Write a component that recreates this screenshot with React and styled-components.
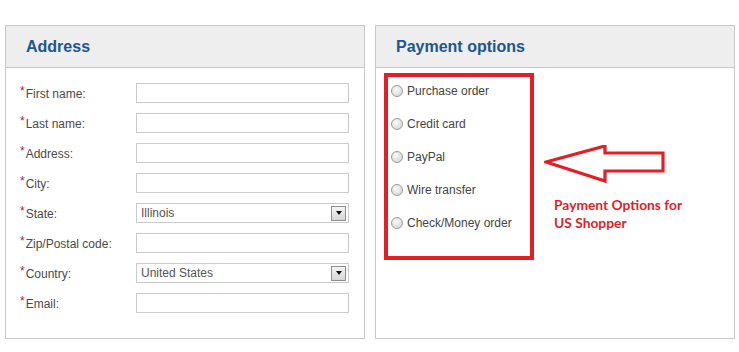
import React from 'react'
import styled, { createGlobalStyle } from 'styled-components'

const GlobalStyle = createGlobalStyle`
  body {
    margin: 0;
    background: #fff;
    font-family: "Liberation Sans", Arial, sans-serif;
  }
`;

const addressFields = [
  { label: 'First name:' },
  { label: 'Last name:' },
  { label: 'Address:' },
  { label: 'City:' },
  { label: 'State:', select: 'Illinois' },
  { label: 'Zip/Postal code:' },
  { label: 'Country:', select: 'United States' },
  { label: 'Email:' },
];

const paymentOptions = ['Purchase order', 'Credit card', 'PayPal', 'Wire transfer', 'Check/Money order'];

function App () {
  return (
    <Page>
      <GlobalStyle />
      <Panel>
        <PanelHeader>Address</PanelHeader>
        <FormBody>
          {addressFields.map((f) => (
            <FieldRow key={f.label}>
              <Label><Star>*</Star>{f.label}</Label>
              {f.select ? (
                <SelectBox>
                  <span>{f.select}</span>
                  <SelectButton><Caret /></SelectButton>
                </SelectBox>
              ) : (
                <TextInput type="text" />
              )}
            </FieldRow>
          ))}
        </FormBody>
      </Panel>

      <Panel>
        <PanelHeader>Payment options</PanelHeader>
        <PaymentBody>
          <HighlightBox>
            {paymentOptions.map((p) => (
              <OptionRow key={p}>
                <Radio />
                {p}
              </OptionRow>
            ))}
          </HighlightBox>
          <Callout>
            <svg width="122" height="40" viewBox="0 0 122 40">
              <polygon
                points="2,17 61,1 61,8 119,8 119,26 61,26 61,36"
                fill="none"
                stroke="#e31e26"
                strokeWidth="3.2"
                strokeLinejoin="miter"
              />
            </svg>
            <CalloutText>Payment Options for<br />US Shopper</CalloutText>
          </Callout>
        </PaymentBody>
      </Panel>
    </Page>
  )
}

const Page = styled.div `
    display: flex;
    gap: 10px;
    padding: 25px 0 0 5px;
`;

const Panel = styled.div `
    width: 358px;
    height: 312px;
    border: 1px solid #c9c9c9;
    display: flex;
    flex-direction: column;
`;

const PanelHeader = styled.div `
    height: 41px;
    line-height: 41px;
    background-color: #eeeeee;
    border-bottom: 1px solid #c9c9c9;
    padding-left: 20px;
    font-size: 16px;
    font-weight: bold;
    color: #1d5592;
`;

const FormBody = styled.div `
    display: flex;
    flex-direction: column;
    gap: 10px;
    padding: 15px 0 0 14px;
`;

const FieldRow = styled.div `
    display: flex;
    align-items: center;
    height: 20px;
`;

const Label = styled.div `
    width: 116px;
    font-size: 12px;
    color: #4a4a4a;
    padding-top: 1px;
`;

const Star = styled.span `
    color: #c0141e;
    font-size: 12px;
    margin-right: 1px;
    position: relative;
    top: -3px;
`;

const TextInput = styled.input `
    box-sizing: border-box;
    width: 213px;
    height: 20px;
    margin: 0;
    border: 1px solid #cbcbcb;
    background: #fff;
    outline: none;
`;

const SelectBox = styled.div `
    box-sizing: border-box;
    width: 213px;
    height: 20px;
    border: 1px solid #cbcbcb;
    display: flex;
    align-items: center;
    justify-content: space-between;
    padding: 0 2px 0 4px;
    font-size: 12px;
    color: #555;
`;

const SelectButton = styled.div `
    box-sizing: border-box;
    width: 15px;
    height: 15px;
    border: 1px solid #8e8e8e;
    background: linear-gradient(#f4f4f4, #d6d6d6);
    display: flex;
    align-items: center;
    justify-content: center;
`;

const Caret = styled.div `
    width: 0;
    height: 0;
    border-left: 3px solid transparent;
    border-right: 3px solid transparent;
    border-top: 4px solid #111;
`;

const PaymentBody = styled.div `
    display: flex;
    align-items: flex-start;
    padding: 5px 0 0 8px;
`;

const HighlightBox = styled.div `
    box-sizing: border-box;
    width: 150px;
    height: 187px;
    border: 4px solid #e31e26;
    display: flex;
    flex-direction: column;
    gap: 19px;
    padding: 7px 0 0 3px;
`;

const OptionRow = styled.div `
    display: flex;
    align-items: center;
    gap: 4px;
    height: 14px;
    font-size: 12px;
    color: #444;
`;

const Radio = styled.span `
    box-sizing: border-box;
    width: 12px;
    height: 12px;
    border-radius: 50%;
    border: 1px solid #9a9a9a;
    background: radial-gradient(circle at 40% 35%, #fafafa, #d0d0d0);
`;

const Callout = styled.div `
    display: flex;
    flex-direction: column;
    padding: 72px 0 0 10px;
`;

const CalloutText = styled.div `
    margin: 11px 0 0 10px;
    font-family: Lato, "Open Sans", sans-serif;
    font-weight: bold;
    font-size: 13.8px;
    line-height: 18px;
    color: #e31e26;
`;

export default App
